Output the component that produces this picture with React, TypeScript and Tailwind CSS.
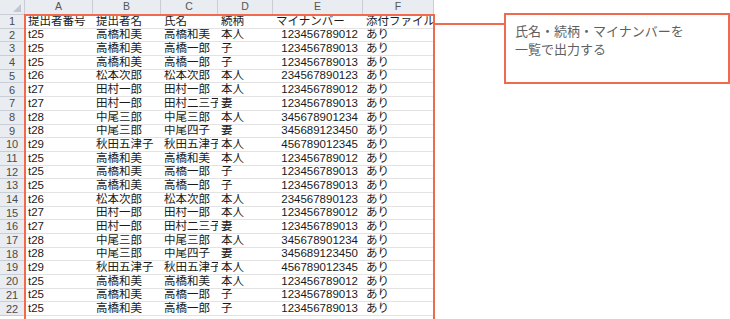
const cols = [
  { key: 'A', w: 'w-[68px]' },
  { key: 'B', w: 'w-[68px]' },
  { key: 'C', w: 'w-[57px]' },
  { key: 'D', w: 'w-[55px]' },
  { key: 'E', w: 'w-[90px]' },
  { key: 'F', w: 'w-[71px]' },
];

const header = ['提出者番号', '提出者名', '氏名', '続柄', 'マイナンバー', '添付ファイル'];

const block: string[][] = [
  ['t25', '高橋和美', '高橋和美', '本人', '123456789012'],
  ['t25', '高橋和美', '高橋一郎', '子', '123456789013'],
  ['t25', '高橋和美', '高橋一郎', '子', '123456789013'],
  ['t26', '松本次郎', '松本次郎', '本人', '234567890123'],
  ['t27', '田村一郎', '田村一郎', '本人', '123456789012'],
  ['t27', '田村一郎', '田村二三子', '妻', '123456789013'],
  ['t28', '中尾三郎', '中尾三郎', '本人', '345678901234'],
  ['t28', '中尾三郎', '中尾四子', '妻', '345689123450'],
  ['t29', '秋田五津子', '秋田五津子', '本人', '456789012345'],
];

const rows = [...block, ...block, ...block.slice(0, 3)];

const cellFont = "font-['Liberation_Sans','Noto_Sans_CJK_JP',sans-serif]";

function RowHead({ n }: { n: number }) {
  return (
    <div className="w-[25px] shrink-0 h-full flex items-center justify-center bg-[#e9ecf0] border-r border-b border-[#c9ced6] text-[11px] text-[#4b4b4b]">
      {n}
    </div>
  );
}

export default function App() {
  return (
    <div className={`relative w-[730px] h-[319px] overflow-hidden bg-white flex ${cellFont}`}>
      <div className="w-[434px] shrink-0 flex flex-col">
        {/* column letters */}
        <div className="flex h-[15px] shrink-0">
          <div className="relative w-[25px] shrink-0 bg-[#e9ecf0] border-r border-b border-[#c9ced6]">
            <div className="absolute right-[3px] bottom-[2px] w-0 h-0 border-l-[8px] border-l-transparent border-b-[8px] border-b-[#c3c7cd]" />
          </div>
          {cols.map((c) => (
            <div
              key={c.key}
              className={`${c.w} shrink-0 flex items-center justify-center bg-[#e9ecf0] border-r border-b border-[#c9ced6] text-[10.5px] text-[#555]`}
            >
              {c.key}
            </div>
          ))}
        </div>

        {/* row 1 */}
        <div className="flex h-[13.7px] shrink-0">
          <RowHead n={1} />
          {header.map((h, i) => (
            <div
              key={i}
              className={`${cols[i].w} shrink-0 flex items-center pl-[3px] border-b border-[#e3e3e3] text-[11.5px] text-[#1a1a1a] whitespace-nowrap overflow-hidden`}
            >
              {h}
            </div>
          ))}
        </div>

        {rows.map((r, idx) => (
          <div key={idx} className="flex h-[13.7px] shrink-0">
            <RowHead n={idx + 2} />
            {r.map((v, i) => (
              <div
                key={i}
                className={`${cols[i].w} shrink-0 flex items-center border-b border-[#e3e3e3] text-[11.5px] text-[#1a1a1a] whitespace-nowrap overflow-hidden ${
                  i === 4 ? 'justify-end pr-[5px]' : 'pl-[3px]'
                }`}
              >
                {v}
              </div>
            ))}
            <div className="w-[71px] shrink-0 flex items-center pl-[3px] border-b border-[#e3e3e3] text-[11.5px] text-[#1a1a1a]">
              あり
            </div>
          </div>
        ))}
      </div>

      {/* callout */}
      <div className="flex-1 pl-[70px] pt-[13px]">
        <div className="w-[226px] h-[71px] border-2 border-[#f26a4d] bg-white pl-[9px] pt-[7px] text-[13px] leading-[18px] text-[#5f5f5f] font-['Noto_Sans_CJK_JP',sans-serif]">
          <p>氏名・続柄・マイナンバーを</p>
          <p>一覧で出力する</p>
        </div>
      </div>

      {/* highlight frame over the sheet */}
      <div className="absolute left-[24px] top-[14px] w-[411px] h-[330px] border-2 border-[#f26a4d] pointer-events-none" />
      <div className="absolute left-[435px] top-[23px] w-[70px] h-[2px] bg-[#f26a4d]" />
    </div>
  );
}
